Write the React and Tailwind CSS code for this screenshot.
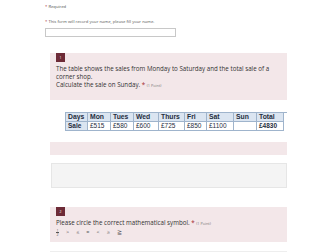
export default function App() {
  const days = [
    ["Days", "Sale", "w-[22px]"],
    ["Mon", "£515", "w-[23px]"],
    ["Tues", "£580", "w-[23px]"],
    ["Wed", "£600", "w-[25px]"],
    ["Thurs", "£725", "w-[26px]"],
    ["Fri", "£850", "w-[22px]"],
    ["Sat", "£1100", "w-[27px]"],
    ["Sun", "", "w-[23px]"],
    ["Total", "£4830", "w-[27px]"],
  ];

  return (
    <div className="w-[336px] h-[252px] overflow-hidden bg-white text-[#333] font-['Open_Sans',sans-serif]">
      <div className="pl-[45px] pt-[4px]">
        {/* top notes */}
        <p className="text-[4.2px] leading-[6px] text-[#555]">
          <span className="text-[#a4262c]">*</span> Required
        </p>
        <p className="mt-[9px] text-[4.2px] leading-[6px] text-[#555]">
          <span className="text-[#a4262c]">*</span> This form will record your name, please fill your name.
        </p>
        <div className="mt-[3px] w-[131px] h-[9px] border border-[#c8c8c8] bg-white" />

        {/* question 1 */}
        <div className="mt-[16px] ml-[5px] w-[237px] bg-[#f3e7e9]">
          <div className="px-[6px]">
            <div className="w-[9px] h-[9px] bg-[#6d2b37] flex items-center justify-center text-[3.5px] text-white">
              1
            </div>
            <p className="mt-[3px] w-[222px] text-[6.2px] leading-[8px] text-[#333]">
              The table shows the sales from Monday to Saturday and the total sale of a corner shop.
              <br />
              Calculate the sale on Sunday.<span className="text-[#a4262c]"> *</span>{" "}
              <span className="text-[3.8px] text-[#777]">(1 Point)</span>
            </p>
          </div>
          <div className="mt-[10px] h-[42px] bg-white pl-[15px] pt-[12px] font-['Liberation_Sans',sans-serif]">
            <div className="flex border-l border-t border-[#9fb4cc]">
              {days.map(([d, , w]) => (
                <div
                  key={d}
                  className={`${w} h-[9px] border-r border-b border-[#9fb4cc] bg-[#dbe5f1] pl-[2px] text-[6.8px] leading-[8.5px] font-bold text-[#1f2d3d]`}
                >
                  {d}
                </div>
              ))}
            </div>
            <div className="flex border-l border-[#9fb4cc]">
              {days.map(([d, s, w], i) => (
                <div
                  key={d}
                  className={`${w} h-[8.5px] border-r border-b border-[#9fb4cc] pl-[2px] text-[6.5px] leading-[8px] text-[#1f2d3d] ${
                    i === 0 ? "bg-[#dbe5f1] font-bold" : i === 8 ? "bg-white font-bold" : "bg-white"
                  }`}
                >
                  {s}
                </div>
              ))}
            </div>
          </div>
          <div className="h-[13px]" />
        </div>

        {/* answer box */}
        <div className="mt-[8px] ml-[6px] w-[236px] h-[25px] bg-[#f4f4f4] border border-[#e6e6e6]" />

        {/* question 2 */}
        <div className="mt-[19px] ml-[5px] w-[237px] h-[35px] bg-[#f3e7e9] px-[6px]">
          <div className="w-[9px] h-[9px] bg-[#6d2b37] flex items-center justify-center text-[3.5px] text-white">
            2
          </div>
          <p className="mt-[3px] text-[6.2px] leading-[7px] text-[#333]">
            Please circle the correct mathematical symbol.<span className="text-[#a4262c]"> *</span>{" "}
            <span className="text-[3.8px] text-[#777]">(1 Point)</span>
          </p>
          <div className="mt-[1px] flex items-center gap-[7px] text-[5.5px] leading-[9px] text-[#555]">
            <div className="flex flex-col items-center leading-[3.5px] text-[3.5px]">
              <span>1</span>
              <span className="border-t border-[#555] w-[3px]" />
              <span>2</span>
            </div>
            <span>&gt;</span>
            <span>≤</span>
            <span>=</span>
            <span>&lt;</span>
            <span>≥</span>
            <span>≧</span>
          </div>
        </div>
        <div className="mt-[9px] ml-[5px] w-[237px] border-t border-[#eeeeee]" />
      </div>
    </div>
  );
}
